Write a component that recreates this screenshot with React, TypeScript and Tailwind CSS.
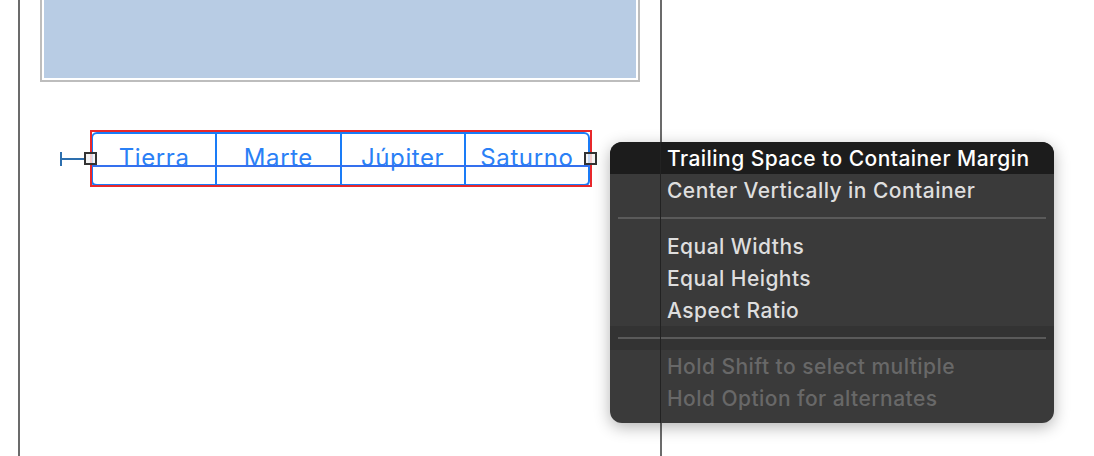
import React from "react";

const segments = ["Tierra", "Marte", "Júpiter", "Saturno"];

const MenuRow = ({
  label,
  active,
  disabled,
}: {
  label: string;
  active?: boolean;
  disabled?: boolean;
}) => (
  <div
    className={`h-[32px] flex items-center pl-[57px] text-[21px] tracking-[0.45px] font-medium leading-none ${
      active
        ? "bg-[#1c1c1c] text-white"
        : disabled
        ? "text-[#686868]"
        : "text-[#dedede]"
    }`}
  >
    {label}
  </div>
);

const Separator = ({ dark }: { dark?: boolean }) => (
  <div className={`h-[24px] flex items-center px-[8px] ${dark ? "bg-[#333333]" : ""}`}>
    <div className="h-[2px] w-full bg-[#5a5a5a]" />
  </div>
);

const App = () => {
  return (
    <div className="relative w-[1094px] h-[456px] bg-white overflow-hidden font-['Inter','Liberation_Sans',sans-serif]">
      {/* canvas */}
      <div className="ml-[18px] w-[644px] h-full border-x-2 border-[#6b6b6b] flex flex-col">
        {/* view box */}
        <div className="ml-[20px] w-[600px] h-[82px] border-x-2 border-b-2 border-[#bdbdbd] bg-white px-[2px] pb-[2px]">
          <div className="w-full h-full bg-[#b8cce4]" />
        </div>

        {/* segmented control */}
        <div className="relative ml-[70px] mt-[48px] w-[502px] h-[57px] pt-[2px] pl-[1px]">
          <div className="w-[499px] h-[55px] rounded-[6px] border-2 border-b-[3px] border-[#1a7cf7] flex">
            {segments.map((s, i) => (
              <div
                key={s}
                className={`flex-1 flex items-center justify-center pb-[3px] text-[24px] tracking-[0.6px] text-[#2a80f6] ${
                  i > 0 ? "border-l-2 border-[#1a7cf7]" : ""
                }`}
              >
                {s}
              </div>
            ))}
          </div>
          {/* baseline indicator */}
          <div className="absolute left-[1px] top-[35px] w-[499px] h-[2px] bg-[#3470ee]" />
          {/* selection frame */}
          <div className="absolute inset-0 border-2 border-[#e8282b]" />
          {/* leading constraint */}
          <div className="absolute left-[-30px] top-[22px] w-[2px] h-[14px] bg-[#2d6fae]" />
          <div className="absolute left-[-30px] top-[28px] w-[24px] h-[2px] bg-[#2d6fae]" />
          {/* handles */}
          <div className="absolute left-[-6px] top-[22px] w-[13px] h-[13px] border-2 border-[#333333] bg-[#f2f2f2]/80" />
          <div className="absolute left-[494px] top-[22px] w-[13px] h-[13px] border-2 border-[#333333] bg-[#f2f2f2]/80" />
        </div>
      </div>

      {/* context menu */}
      <div className="absolute left-[610px] top-[142px] w-[444px] h-[281px] rounded-[12px] bg-[#3a3a3a] overflow-hidden flex flex-col shadow-[0_4px_16px_rgba(0,0,0,0.3)]">
        <MenuRow label="Trailing Space to Container Margin" active />
        <MenuRow label="Center Vertically in Container" />
        <Separator />
        <MenuRow label="Equal Widths" />
        <MenuRow label="Equal Heights" />
        <MenuRow label="Aspect Ratio" />
        <Separator dark />
        <MenuRow label="Hold Shift to select multiple" disabled />
        <MenuRow label="Hold Option for alternates" disabled />
        <div className="absolute left-[50px] top-0 w-[1px] h-full bg-[#222222]" />
      </div>
    </div>
  );
};

export default App;
